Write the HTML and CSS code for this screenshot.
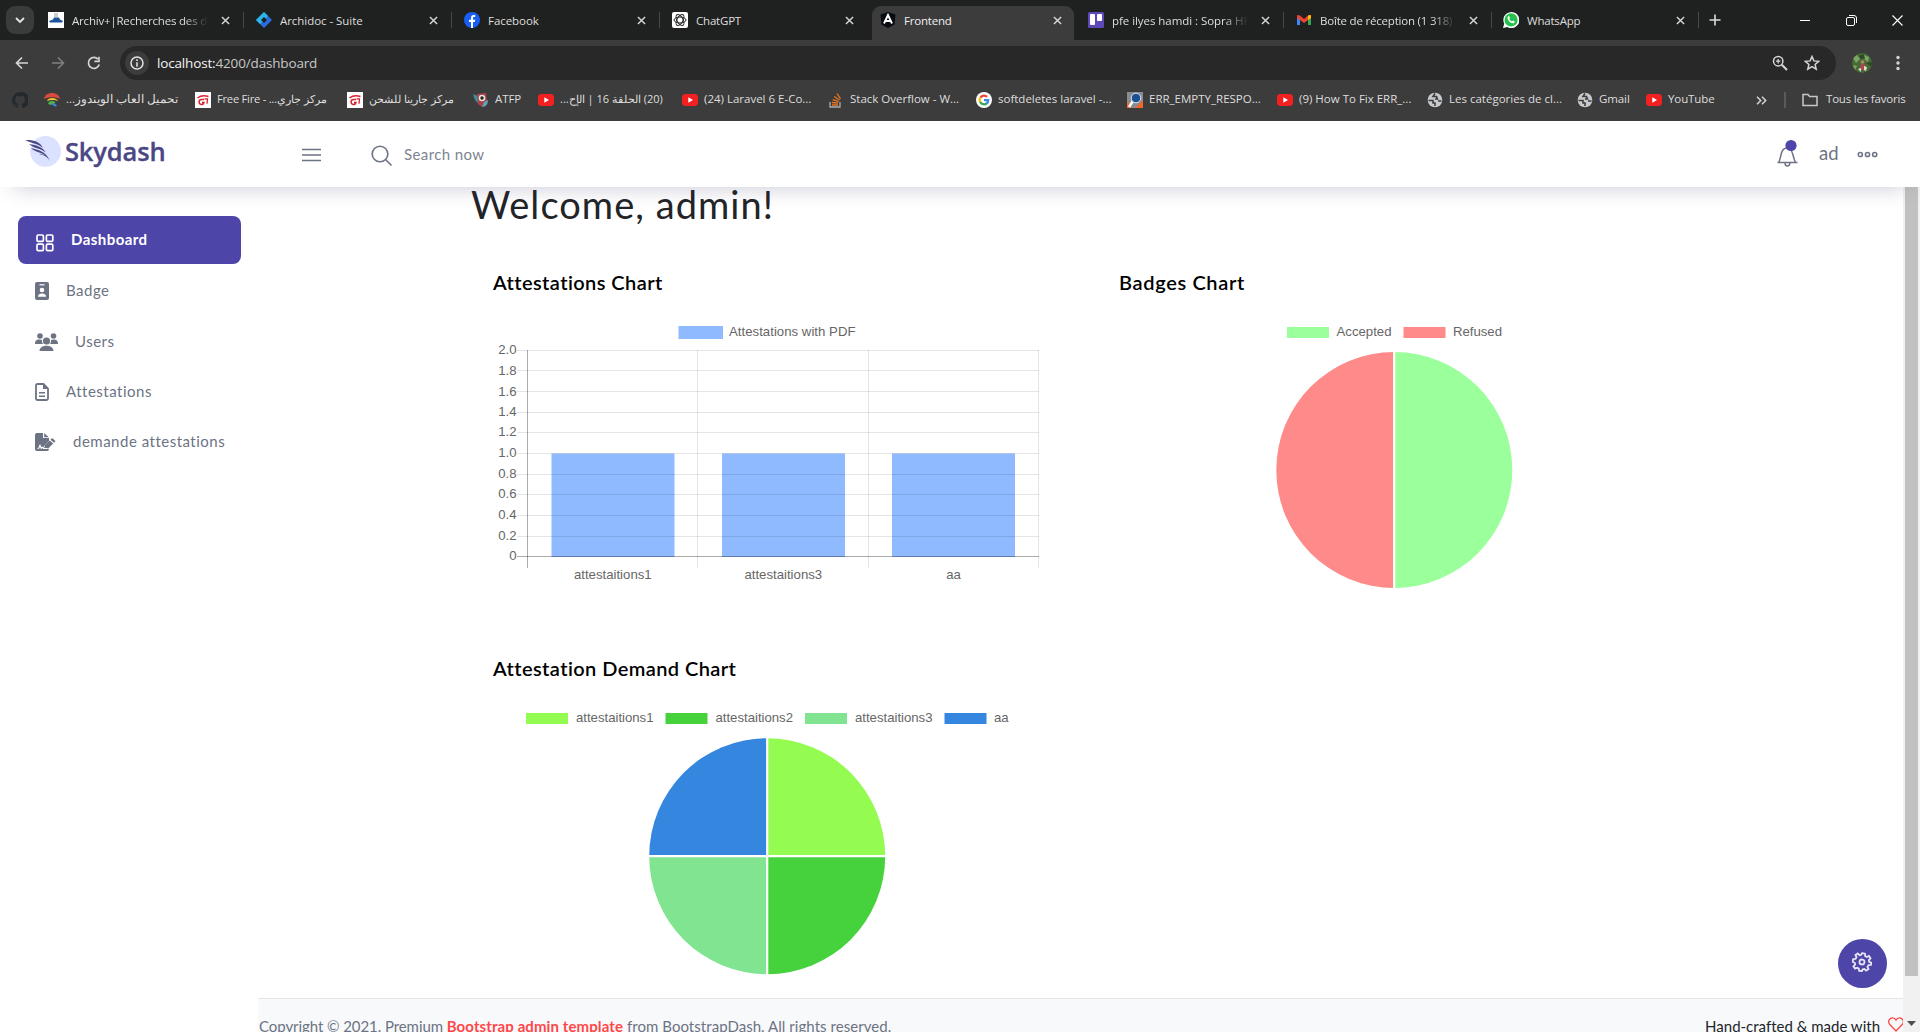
FILE: index.html
```html
<!DOCTYPE html>
<html lang="fr">
<head>
<meta charset="utf-8">
<title>Frontend</title>
<link rel="stylesheet" href="styles.css">
</head>
<body>
<svg class="defs" width="0" height="0">
  <symbol id="close" viewBox="0 0 10 10"><path d="M1 1l8 8M9 1L1 9" stroke="#d5d7d6" stroke-width="1.6" fill="none"/></symbol>
  <symbol id="yt" viewBox="0 0 16 16"><rect y="2" width="16" height="12" rx="3.4" fill="#f22020"/><path d="M6.3 5.3v5.4L11 8z" fill="#fff"/></symbol>
  <symbol id="globe" viewBox="0 0 16 16"><circle cx="8" cy="8" r="7.3" fill="#c7cacd"/><path d="M1.500 8.500h4.500v2.500h2v3M8 1.500L6 4.500h3.500l1 2.500H8M14.500 9H11" fill="none" stroke="#3c3c3c" stroke-width="1.600"/></symbol>
  <symbol id="garena" viewBox="0 0 16 16"><path fill="#fff" d="M0 0h16v16H0z"/><path d="M2.500 6c3-2.500 8-2.500 11-1.500M9 7.500H6.500a2.500 2.500 0 1 0 2.500 3H7" fill="none" stroke="#d9232e" stroke-width="1.500"/><path d="M9.500 6.800h3l-.5 5" fill="none" stroke="#d9232e" stroke-width="1.300"/></symbol>
</svg>

<header class="browser">
  <div class="tabstrip">
    <div class="tab-search"><svg width="10" height="8" viewBox="0 0 10 8"><path d="M1 2l4 4 4-4" fill="none" stroke="#e3e3e3" stroke-width="1.900"/></svg></div>
    <div class="tab"><svg class="fav" viewBox="0 0 16 16"><path fill="#fff" d="M0 0h16v16H0z"/><path fill="#ccc" d="M6 1h4v4H6z"/><path d="M1 9l4-1.500 1-2h5l1 2 3 1.500-1 1.500H2z" fill="#1c559b"/></svg><span class="label fade">Archiv+|Recherches des do</span><svg class="x"><use href="#close"/></svg></div>
    <div class="tab"><svg class="fav" viewBox="0 0 16 16"><path d="M8 0l8 8-8 8-8-8z" fill="#2a6fe0"/><path d="M8 0L0 8l4 4 4-4 4-4z" fill="#2bb5e8"/><path d="M8 5l3 3-3 3-3-3z" fill="#1f2120"/></svg><span class="label wide">Archidoc - Suite</span><svg class="x"><use href="#close"/></svg></div>
    <div class="tab"><svg class="fav" viewBox="0 0 16 16"><circle cx="8" cy="8" r="8" fill="#1a5ff5"/><path d="M7 16V10H5V7.700h2V6.200C7 4 8 3 9.700 3h1.500v2h-1C9.300 5 9 5.500 9 6.300v1.400h2.200L10.800 10H9v6z" fill="#fff"/></svg><span class="label wide">Facebook</span><svg class="x"><use href="#close"/></svg></div>
    <div class="tab nosep"><svg class="fav" viewBox="0 0 16 16"><rect width="16" height="16" rx="2" fill="#fff"/><g fill="none" stroke="#222" stroke-width="1"><ellipse cx="8" cy="8" rx="6" ry="3"/><ellipse cx="8" cy="8" rx="6" ry="3" transform="rotate(60 8 8)"/><ellipse cx="8" cy="8" rx="6" ry="3" transform="rotate(120 8 8)"/></g></svg><span class="label">ChatGPT</span><svg class="x"><use href="#close"/></svg></div>
    <div class="tab active nosep"><svg class="fav" viewBox="0 0 16 16"><path d="M8 0l7.500 2.500-1 10L8 16l-6.500-3.500-1-10z" fill="#080b12"/><path d="M4 11.500L8 3l4 8.500M5.500 9h5" fill="none" stroke="#fff" stroke-width="1.900"/></svg><span class="label">Frontend</span><svg class="x"><use href="#close"/></svg></div>
    <div class="tab"><svg class="fav" viewBox="0 0 16 16"><rect width="16" height="16" rx="1.500" fill="#5f48b8"/><rect x="2" y="2" width="5" height="11" rx=".8" fill="#fff"/><rect x="9" y="2" width="5" height="7" rx=".8" fill="#fff"/></svg><span class="label fade wide">pfe ilyes hamdi : Sopra HR S</span><svg class="x"><use href="#close"/></svg></div>
    <div class="tab short"><svg class="fav" viewBox="0 0 16 16"><path d="M1 3.500V13h3V7z" fill="#4285f4"/><path d="M12 7v6h3V3.500z" fill="#34a853"/><path d="M1 3l3 .5 4 3.500 4-3.500 3-.5v3L8 11 1 6z" fill="#ea4335"/><path d="M12 3.500l3-.5v3l-3 2z" fill="#fbbc04"/></svg><span class="label fade">Boîte de réception (1 318) -</span><svg class="x"><use href="#close"/></svg></div>
    <div class="tab short"><svg class="fav" viewBox="0 0 16 16"><path d="M0 16l1.200-4.300A8 8 0 1 1 4.300 15z" fill="#fff"/><circle cx="8.100" cy="7.900" r="6.600" fill="#25c04e"/><path d="M5 4.500c1-1 1.500 0 2 1.500L6.300 7c.7 1.300 1.500 2 2.700 2.600l1-1c1.500.5 2.300 1 1.300 2.100C8.500 13 3 7.500 5 4.500" fill="#fff"/></svg><span class="label">WhatsApp</span><svg class="x"><use href="#close"/></svg></div>
    <svg class="plus" width="12" height="12"><path d="M6 .5v11M.5 6h11" stroke="#dcdcdc" stroke-width="1.600"/></svg>
    <div class="winctl">
      <svg width="11" height="11"><path d="M0 5.500h10" stroke="#fff"/></svg>
      <svg width="11" height="11"><rect x=".5" y="2.500" width="8" height="8" rx="1.500" fill="none" stroke="#fff"/><path d="M3 .5h5a2.500 2.500 0 0 1 2.500 2.500v5" fill="none" stroke="#fff"/></svg>
      <svg width="11" height="11"><path d="M.5.5l10 10M10.500.5l-10 10" stroke="#fff" stroke-width="1.100"/></svg>
    </div>
  </div>

  <div class="toolbar">
    <div class="nav-icons">
      <svg width="14" height="14" viewBox="0 0 14 14"><path d="M13 7H2M7 1.500L1.500 7 7 12.500" fill="none" stroke="#d6d6d6" stroke-width="1.700"/></svg>
      <svg width="14" height="14" viewBox="0 0 14 14"><path d="M1 7h11M7 1.500L12.500 7 7 12.500" fill="none" stroke="#808080" stroke-width="1.500"/></svg>
      <svg width="14" height="14" viewBox="0 0 14 14"><path d="M12.200 8.500A5.500 5.500 0 1 1 11 3.200" fill="none" stroke="#d6d6d6" stroke-width="1.700"/><path d="M12.800.8v5.400H7.400V4.600h3.800V.8z" fill="#d6d6d6"/></svg>
    </div>
    <div class="omnibox">
      <span class="info"><svg width="14" height="14" viewBox="0 0 14 14"><circle cx="7" cy="7" r="6" fill="none" stroke="#e3e3e3" stroke-width="1.500"/><path d="M7 3.300v1.600M7 6.200v4.500" stroke="#e3e3e3" stroke-width="1.500"/></svg></span>
      <span class="url"><b>localhost:</b>4200/dashboard</span>
      <svg class="mag" width="16" height="16" viewBox="0 0 16 16"><circle cx="6.200" cy="6.200" r="4.700" fill="none" stroke="#d6d6d6" stroke-width="1.500"/><path d="M9.800 9.800L15 15" stroke="#d6d6d6" stroke-width="2"/><path d="M6.200 4v4.400M4 6.200h4.400" stroke="#d6d6d6" stroke-width="1.300"/></svg>
      <svg width="16" height="16" viewBox="0 0 16 16"><path d="M8 1.500l1.900 4.400 4.800.4-3.600 3.100 1.100 4.700L8 11.600l-4.200 2.500 1.100-4.700L1.300 6.300l4.800-.4z" fill="none" stroke="#d6d6d6" stroke-width="1.500"/></svg>
    </div>
    <svg class="avatar" width="20" height="20" viewBox="0 0 20 20"><defs><clipPath id="av"><circle cx="10" cy="10" r="10"/></clipPath></defs><g clip-path="url(#av)"><path fill="#476b37" d="M0 0h20v20H0z"/><path fill="#7da467" d="M1 5l4-3 3 4-4 4zM12 2l5 2-1 5-3-2zM1 12l4 1-2 4z"/><path fill="#2c4a22" d="M7 3l4-2 2 4-4 1zM14 10l6-1v5z"/><circle cx="10.500" cy="9" r="1.800" fill="#b98568"/><path fill="#a8484a" d="M9 11h4l1 6H8z"/><path fill="#e0dcd4" d="M12 13l3 1-1 4-2-1zM6 16l3-1v4z"/></g></svg>
    <svg class="kebab" width="4" height="16"><circle cx="2" cy="2.500" r="1.700"/><circle cx="2" cy="8" r="1.700"/><circle cx="2" cy="13.500" r="1.700"/></svg>
  </div>

  <div class="bookmarks">
    <div class="bm b0"><svg viewBox="0 0 16 16"><path d="M8 0a8 8 0 0 0-2.500 15.600c.4 0 .5-.2.500-.4v-1.600c-2.200.4-2.700-1-2.700-1-.5-1.200-1-1.300-1-1.300 1.500 0 1.900 1.100 1.900 1.100.7 1 1.500.8 2 .6.200-.6.400-.8.600-1-2-.3-3.600-1-3.600-3.900 0-1 .3-1.600.8-2.200-.1-.6-.2-1.300.1-2.100 0 0 .8-.2 2.200.8a7 7 0 0 1 3.600 0c1.400-1 2.200-.8 2.200-.8.300.8.200 1.500.1 2.100.5.600.8 1.300.8 2.200 0 2.900-1.600 3.600-3.600 3.900.4.400.7.900.7 1.600v2c0 .2.100.4.500.4A8 8 0 0 0 8 0" fill="#24292e"/></svg></div>
    <div class="bm b1"><svg viewBox="0 0 16 16"><path d="M0 7c1-8 15-8 16 0-4-2.500-12-2.500-16 0" fill="#d84b3c"/><path d="M3 9c1-4 9-4 11 0-3-1.500-8-1.500-11 0" fill="#f0c52e"/><path d="M4 12c1-4 6-4 7.500-1-2 0-3 3-7.500 1" fill="#4db051"/><path d="M8 12c2-2 4 0 5 2-2 1-4 0-5-2" fill="#3f83d8"/></svg><span dir="rtl">تحميل العاب الويندوز...</span></div>
    <div class="bm b2"><svg><use href="#garena"/></svg><span><bdi>Free Fire - ...</bdi><bdi>مركز جاري</bdi></span></div>
    <div class="bm b3"><svg><use href="#garena"/></svg><span dir="rtl">مركز جارينا للشحن</span></div>
    <div class="bm b4"><svg viewBox="0 0 16 16"><path d="M0 2l5 2 1 8c-3-2-5-5-6-10" fill="#3a8f9b"/><path d="M4 2l9-1 1 8-5 6-4-3z" fill="#a9404a"/><circle cx="9" cy="6" r="3.300" fill="#e8e2d8"/><circle cx="9" cy="6" r="1.700" fill="#222"/><path d="M11 10l4-2c0 4-2 7-6 7z" fill="#5ba7b4"/></svg><span>ATFP</span></div>
    <div class="bm b5"><svg><use href="#yt"/></svg><span dir="rtl">(20) الحلقة 16 | الإح...</span></div>
    <div class="bm b6"><svg><use href="#yt"/></svg><span>(24) Laravel 6 E-Co...</span></div>
    <div class="bm b7"><svg viewBox="0 0 16 16"><path d="M2 10v5h10v-5" fill="none" stroke="#a9adb1" stroke-width="1.300"/><path d="M4 13h6M4 10.500l6 .7M4.700 7.600l5.800 2M6.300 4.400l5.200 3.800M9 1.500l3.500 5.300" stroke="#e87722" stroke-width="1.300"/></svg><span>Stack Overflow - W...</span></div>
    <div class="bm b8"><svg viewBox="0 0 16 16"><circle cx="8" cy="8" r="8" fill="#fff"/><g fill="none" stroke-width="2.300"><path d="M4.500 5.500A4.300 4.300 0 0 1 11 4.900" stroke="#ea4335"/><path d="M4.300 10.200a4.500 4.500 0 0 1 0-4.600" stroke="#fbbc05"/><path d="M11 11.100a4.300 4.300 0 0 1-6.800-1.200" stroke="#34a853"/><path d="M8 8.200h4.200a4 4 0 0 1-1.500 3.200" stroke="#4285f4"/></g></svg><span>softdeletes laravel -...</span></div>
    <div class="bm b9"><svg viewBox="0 0 16 16"><path fill="#8b8b90" d="M0 0h16v16H0z"/><path fill="#ee6a2c" d="M0 9l5 7H0zM8 16l8-8v8z"/><path d="M6 9l-4 6" stroke="#fff" stroke-width="2.500"/><circle cx="9" cy="6" r="4.800" fill="#1d4f93" stroke="#dfe9f3"/></svg><span>ERR_EMPTY_RESPO...</span></div>
    <div class="bm b10"><svg><use href="#yt"/></svg><span>(9) How To Fix ERR_...</span></div>
    <div class="bm b11"><svg><use href="#globe"/></svg><span>Les catégories de cl...</span></div>
    <div class="bm b12"><svg><use href="#globe"/></svg><span>Gmail</span></div>
    <div class="bm b13"><svg><use href="#yt"/></svg><span>YouTube</span></div>
    <svg class="more" width="11" height="9"><path d="M1 .8l3.700 3.700L1 8.200M6 .8l3.700 3.700L6 8.200" fill="none" stroke="#d6d6d6" stroke-width="1.500"/></svg>
    <i class="bar"></i>
    <div class="bm b14"><svg viewBox="0 0 16 16"><path d="M1 13.500V2.500h5l1.600 2H15v9z" fill="none" stroke="#c7c7c7" stroke-width="1.500"/></svg><span>Tous les favoris</span></div>
  </div>
</header>

<nav class="navbar">
  <div class="brand">
    <svg width="38" height="34" viewBox="0 0 38 34"><circle cx="20.500" cy="17.300" r="15.400" fill="#dae2ff"/><g fill="#4b4684"><path d="M0 6c8-.5 15 1.500 18 8C13 9.500 6 9 0 6"/><path d="M4 10c7 1 13 2.500 17 8.500C16 14.500 8 14 4 10"/><path d="M6 14c7 2 15 3 19 13-3-5-7-6-11-7 3 0 5 .5 7 2-4-4-11-3.500-15-8"/></g></svg>
    <span>Skydash</span>
  </div>
  <svg class="burger" width="20" height="14"><path d="M0 1.500h19M0 7h19M0 12.500h19" stroke="#6c7383" stroke-width="1.500"/></svg>
  <svg class="search" width="22" height="22"><circle cx="9" cy="9" r="7.800" fill="none" stroke="#6c7383" stroke-width="1.600"/><path d="M14.500 14.500l6 6" stroke="#6c7383" stroke-width="1.600"/></svg>
  <span class="placeholder">Search now</span>
  <svg class="bell" width="24" height="30" viewBox="0 0 24 30"><g fill="none" stroke="#6c7383" stroke-width="1.500"><path d="M2.800 24.500C5 20 4.500 13 8 11q3-2 6 0c3 2 3 9 5.500 13.500M1.500 24.500h20"/><path d="M9 25q0 3 2.400 3t2.400-3"/></g><circle cx="15" cy="7.500" r="5.600" fill="#4d46a8"/></svg>
  <span class="user">ad</span>
  <svg class="dots" width="22" height="7"><g fill="none" stroke="#6c7383" stroke-width="1.500"><circle cx="3.300" cy="3.500" r="2.100"/><circle cx="10.500" cy="3.500" r="2.100"/><circle cx="17.700" cy="3.500" r="2.100"/></g></svg>
</nav>

<div class="page">
  <aside class="sidebar">
    <a class="item on"><svg width="18" height="18" viewBox="0 0 18 18"><g fill="none" stroke="#fff" stroke-width="1.700"><rect x="1" y="1" width="6.400" height="6.400" rx="1.200"/><rect x="10.400" y="1" width="6.400" height="6.400" rx="1.200"/><rect x="1" y="10.200" width="6.400" height="6.400" rx="1.200"/><rect x="10.400" y="10.200" width="6.400" height="6.400" rx="1.200"/></g></svg><span>Dashboard</span></a>
    <a class="item"><svg width="14" height="18" viewBox="0 0 14 18"><rect width="14" height="18" rx="2" fill="#6c7383"/><path d="M4.500 2.800h5" stroke="#fff" stroke-width="1.200"/><circle cx="7" cy="8" r="2.300" fill="#fff"/><path d="M2.900 14.800c0-4.400 8.200-4.400 8.200 0z" fill="#fff"/></svg><span>Badge</span></a>
    <a class="item users"><svg width="23" height="18" viewBox="0 0 23 18"><g fill="#6c7383"><circle cx="5" cy="3" r="2.800"/><circle cx="18.500" cy="3" r="2.800"/><circle cx="11.500" cy="8" r="3.600"/><path d="M0 11c0-5 4-5 7-4q-.5 2.500 1 4zM23 11c0-5-4-5-7-4q.5 2.500-1 4zM4.500 18c0-7 14-7 14 0z"/></g></svg><span>Users</span></a>
    <a class="item"><svg width="14" height="18" viewBox="0 0 14 18"><path d="M1 2.500Q1 1 2.500 1h6L13 5.500v10q0 1.500-1.500 1.500h-9Q1 17 1 15.500z" fill="none" stroke="#6c7383" stroke-width="1.800"/><path d="M8 1v5h5" fill="#6c7383"/><path d="M4 9.800h6M4 13.200h6" stroke="#6c7383" stroke-width="1.500"/></svg><span>Attestations</span></a>
    <a class="item demand"><svg width="21" height="18" viewBox="0 0 21 18"><path d="M0 2Q0 0 2 0h6v5h6v3l-5 5-1 3h6q0 2-2 2H2q-2 0-2-2z" fill="#6c7383"/><path d="M9.200 0l4.600 4.200H9.200zM17 5l3.500 3-1.500 1.700-3.500-3zM14.700 7.500l3.500 3-5 5-4.200 1 .8-4.200z" fill="#6c7383"/><path d="M2.500 15.500l1.300-.2 1.200-3 1.200 3 1.300-1 1 1.200h4" fill="none" stroke="#fff" stroke-width="1.200"/></svg><span>demande attestations</span></a>
  </aside>

  <main class="main">
    <h1>Welcome, admin!</h1>
    <div class="charts">
      <section class="card">
        <h2>Attestations Chart</h2>
        <svg class="chart" width="564" height="290" viewBox="485 310 564 290">
          <rect x="678.500" y="326" width="44.500" height="13" fill="#8fbaff"/><text x="729" y="335.800" textLength="126.500">Attestations with PDF</text>
          <g fill="#8fbaff"><path d="M551.500 453.500h123V557h-123zM722 453.500h123V557H722zM892 453.500h123V557H892z"/></g>
          <g stroke="rgba(0,0,0,.1)"><path d="M517 350.500h522M517 370.500h522M517 391.500h522M517 412.500h522M517 432.500h522M517 453.500h522M517 474.500h522M517 494.500h522M517 515.500h522M517 536.500h522M697.500 350v218M868.500 350v218M1038.500 350v218"/></g>
          <path d="M527.500 350v218M517 556.500h522" stroke="rgba(0,0,0,.33)"/>
          <g text-anchor="end"><text x="516.500" y="354">2.0</text><text x="516.500" y="375">1.8</text><text x="516.500" y="395.500">1.6</text><text x="516.500" y="416">1.4</text><text x="516.500" y="436">1.2</text><text x="516.500" y="457">1.0</text><text x="516.500" y="478">0.8</text><text x="516.500" y="498">0.6</text><text x="516.500" y="519">0.4</text><text x="516.500" y="540">0.2</text><text x="516.500" y="560">0</text></g>
          <g text-anchor="middle"><text x="612.800" y="579">attestaitions1</text><text x="783.300" y="579">attestaitions3</text><text x="953.500" y="579">aa</text></g>
        </svg>
      </section>
      <section class="card">
        <h2 class="badges">Badges Chart</h2>
        <svg class="chart" width="564" height="290" viewBox="1112 310 564 290">
          <rect x="1287" y="327" width="42" height="11" fill="#9bff9b"/><text x="1336.500" y="336" textLength="55">Accepted</text>
          <rect x="1403.500" y="327" width="42" height="11" fill="#ff8a8a"/><text x="1453" y="336" textLength="49">Refused</text>
          <path d="M1394.300 352a118 118 0 0 1 0 236z" fill="#9bff9b"/><path d="M1394.300 588a118 118 0 0 1 0-236z" fill="#ff8a8a"/><path d="M1394.200 351v238" stroke="#fff" stroke-width="2.200"/>
        </svg>
      </section>
      <section class="card">
        <h2>Attestation Demand Chart</h2>
        <svg class="chart" width="564" height="290" viewBox="485 696 564 290">
          <rect x="526" y="713" width="42" height="11" fill="#94fc50"/><text x="576" y="722" textLength="77.500">attestaitions1</text>
          <rect x="665.500" y="713" width="42" height="11" fill="#46d23d"/><text x="715.500" y="722" textLength="77.500">attestaitions2</text>
          <rect x="805" y="713" width="42" height="11" fill="#81e491"/><text x="855" y="722" textLength="77.500">attestaitions3</text>
          <rect x="944.500" y="713" width="42" height="11" fill="#3486df"/><text x="994" y="722">aa</text>
          <g transform="translate(.2 .2)"><path d="M767 856V738a118 118 0 0 1 118 118z" fill="#94fc50"/><path d="M767 856h118a118 118 0 0 1-118 118z" fill="#46d23d"/><path d="M767 856v118a118 118 0 0 1-118-118z" fill="#81e491"/><path d="M767 856H649a118 118 0 0 1 118-118z" fill="#3486df"/><path d="M767 737v238M648 856h238" stroke="#fff" stroke-width="2.200"/></g>
        </svg>
      </section>
    </div>
    <footer class="footer"><p><span class="f1">Copyright © 2021. Premium </span><a>Bootstrap admin template</a><span> from BootstrapDash. All rights reserved.</span></p><p class="made"><span>Hand-crafted &amp; made with</span><svg width="16" height="15" viewBox="0 0 16 15"><path d="M8 14L1.800 7.500C-1 4 2 .8 4.500.8 6.500.8 7.500 2 8 3c.5-1 1.500-2.200 3.500-2.200C14 .8 17 4 14.200 7.500z" fill="none" stroke="#ff4747" stroke-width="1.300"/></svg></p></footer>
  </main>
  <div class="scrollbar"><i class="thumb"></i><svg width="9" height="5"><path d="M0 0h9L4.500 5z" fill="#505050"/></svg></div>
</div>
<div class="settings"><svg width="20" height="20" viewBox="-10 -10 20 20"><g fill="none" stroke="#e6e4f6" stroke-width="1.800" transform="rotate(10)"><circle r="2.500"/><path d="M-1.500-8.700h3L2-6.500l1.800.8 2-1.500 2 2.200L6.400-3l.6 1.600 2.300.5v2.300L7 2l-.8 1.800 1.500 2-2.100 2L3.600 6.500 2 7.100l-.6 2h-2.800l-.6-2-1.700-.7-2 1.300-2-2 1.400-2L-7 2l-2.200-.6v-2.800L-7-2l.8-1.800-1.500-2 2-2 2 1.500L-2-7z"/></g></svg></div>
</body>
</html>
```
FILE: styles.css
```css
* { box-sizing: border-box; }
body { margin: 0; width: 1920px; height: 1032px; overflow: hidden; display: flex; flex-direction: column; position: relative; background: #fff; font-family: Lato, "Open Sans", sans-serif; font-variant-ligatures: none; }
svg { flex: none; display: block; }
svg.defs { position: absolute; }
h1, h2, p { margin: 0; font-weight: 400; }

.browser { height: 121px; background: #3c3c3c; font-family: "Open Sans", "Noto Sans", sans-serif; color: #dedede; flex: none; }
.tabstrip { height: 46px; display: flex; align-items: flex-start; background: linear-gradient(#1f2120 40px, #3c3c3c 40px); }
.tab-search { width: 28px; height: 28px; margin: 6px 6px 0; border-radius: 9px; background: #3a3b3b; display: flex; align-items: center; justify-content: center; }
.tab { width: 208px; height: 34px; margin-top: 6px; padding: 0 0 6px 8px; display: flex; align-items: center; flex: none; font-size: 11.5px; letter-spacing: -.2px; }
.tab::after { content: ""; width: 1px; height: 16px; margin-left: 13px; background: #484a49; }
.tab.nosep::after { background: none; }
.tab.short { width: 207px; }
.tab.active { width: 202px; margin-right: 6px; background: #3c3c3c; border-radius: 9px 9px 0 0; color: #f0f0f0; }
.fav { width: 16px; height: 16px; }
.tab .label { width: 136px; margin: 0 18px 0 8px; white-space: nowrap; overflow: hidden; flex: none; }
.tab .fade { -webkit-mask-image: linear-gradient(90deg, #000 112px, transparent 136px); mask-image: linear-gradient(90deg, #000 112px, transparent 136px); }
.tab .wide { letter-spacing: -.05px; }
.tab .x { width: 9px; height: 9px; margin-left: -5px; }
.plus { margin: 14px 0 0 7px; }
.winctl { display: flex; gap: 35px; margin: 15px 0 0 79px; }

.toolbar { height: 34px; display: flex; align-items: center; }
.nav-icons { width: 120px; padding-left: 15px; display: flex; gap: 22px; }
.omnibox { width: 1716px; height: 34px; border-radius: 17px; background: #282828; display: flex; align-items: center; padding: 0 16px 0 5px; }
.info { width: 24px; height: 24px; border-radius: 12px; background: #3c3c3c; display: flex; align-items: center; justify-content: center; }
.url { margin-left: 8px; font-size: 13.500px; letter-spacing: -.16px; color: #c9c9c9; flex: 1; }
.url b { font-weight: 400; color: #f5f5f5; }
.mag { margin-right: 16px; }
.avatar { margin-left: 16px; }
.kebab { margin-left: 24px; fill: #d6d6d6; }

.bookmarks { height: 41px; display: flex; align-items: center; padding: 0 0 1px 12px; font-size: 11.500px; letter-spacing: 0; }
.bm { display: flex; align-items: center; gap: 6px; white-space: nowrap; flex: none; }
.bm svg { width: 16px; height: 16px; }
.bm span { margin-top: -2px; line-height: 18px; }
.b0 { width: 32px; } .b1 { width: 151px; } .b2 { width: 152px; letter-spacing: -.25px; font-size: 11.200px; }
.b3 { width: 126px; font-size: 10.700px; } .b4 { width: 65px; }
.b5 { width: 144px; font-size: 11px; letter-spacing: -.1px; } .b6 { width: 146px; } .b7 { width: 148px; } .b8 { width: 151px; } .b9 { width: 150px; }
.b10 { width: 150px; } .b11 { width: 150px; } .b12 { width: 69px; } .b13 { width: 110px; } .b14 { gap: 8px; letter-spacing: -.2px; }
.b4, .b12, .b13 { letter-spacing: -.1px; }
.bar { width: 2px; height: 16px; margin: 0 16px 0 17px; background: #5a5a5a; }

.navbar { height: 66px; background: #fff; display: flex; align-items: center; position: relative; z-index: 2; flex: none; box-shadow: 0 13px 22px -14px rgba(60, 60, 110, .32); color: #6c7383; }
.brand { width: 302px; padding-left: 25px; display: flex; align-items: center; gap: 2px; margin-top: -6px; font: 600 25.500px "Open Sans", sans-serif; letter-spacing: -.15px; color: #4b4684; -webkit-text-stroke: .3px #4b4684; }
.burger { margin: 2px 49px 0 0; }
.search { margin-top: 3px; }
.placeholder { margin-left: 11px; width: 1372px; font-size: 15px; letter-spacing: .4px; color: #7d8491; }
.bell { margin-top: -2px; }
.user { width: 18px; margin: -2px 20px 0 19px; font-size: 18.500px; }

.page { flex: 1; display: flex; min-height: 0; }
.sidebar { width: 258px; padding: 29px 17px 0 18px; flex: none; color: #6c7383; font-size: 15px; letter-spacing: .5px; }
.item { height: 48px; margin-bottom: 2.500px; display: flex; align-items: center; gap: 17px; padding-left: 17px; white-space: nowrap; }
.item span { margin-top: -2px; }
.item.on { background: #4d46a8; color: #fff; border-radius: 8px; font-weight: 700; margin-bottom: 3px; letter-spacing: .45px; padding-left: 18px; }
.item.on svg { margin-top: 5px; }
.item.demand span { margin-top: -4px; }
.item.demand svg { margin-top: -1px; }

.main { width: 1645px; flex: none; display: flex; flex-direction: column; }
h1 { height: 63px; padding: 3px 0 0 213px; font-size: 38px; line-height: 28px; letter-spacing: 1.050px; color: #222427; }
.charts { display: grid; grid-template-columns: 627px 627px; grid-template-rows: 386px 362px; padding-left: 227px; }
.card { display: flex; flex-direction: column; }
h2 { height: 60px; padding: 20px 0 0 8px; font-size: 20px; line-height: 24px; font-weight: 600; letter-spacing: .420px; color: #000; }
h2.badges { padding-left: 7px; letter-spacing: .65px; }
.chart text { font: 13.200px "Liberation Sans", Arial, sans-serif; fill: #666; }
.footer { flex: 1; min-height: 34px; border-top: 1px solid #e4e5e7; background: #f8f9fb; display: flex; justify-content: space-between; padding-top: 16px; font-size: 15px; line-height: 22px; color: #6c7383; white-space: pre; letter-spacing: .05px; }
.footer p { padding-left: 1px; }
.f1 { letter-spacing: -.07px; }
.footer a { color: #ff4747; font-weight: 700; letter-spacing: .1px; }
.made { display: flex; color: #212529; gap: 8px; letter-spacing: 0; }
.made svg { margin: 2px -1px 0 0; }
.scrollbar { width: 17px; background: #f1f1f1; display: flex; flex-direction: column; align-items: center; }
.thumb { width: 13px; height: 789px; background: #c1c1c1; margin-bottom: 45px; }
.settings { position: absolute; left: 1838px; top: 939px; width: 49px; height: 49px; border-radius: 50%; background: #4d46a8; display: flex; align-items: center; justify-content: center; padding: 0 1px 4px 0; }
```
